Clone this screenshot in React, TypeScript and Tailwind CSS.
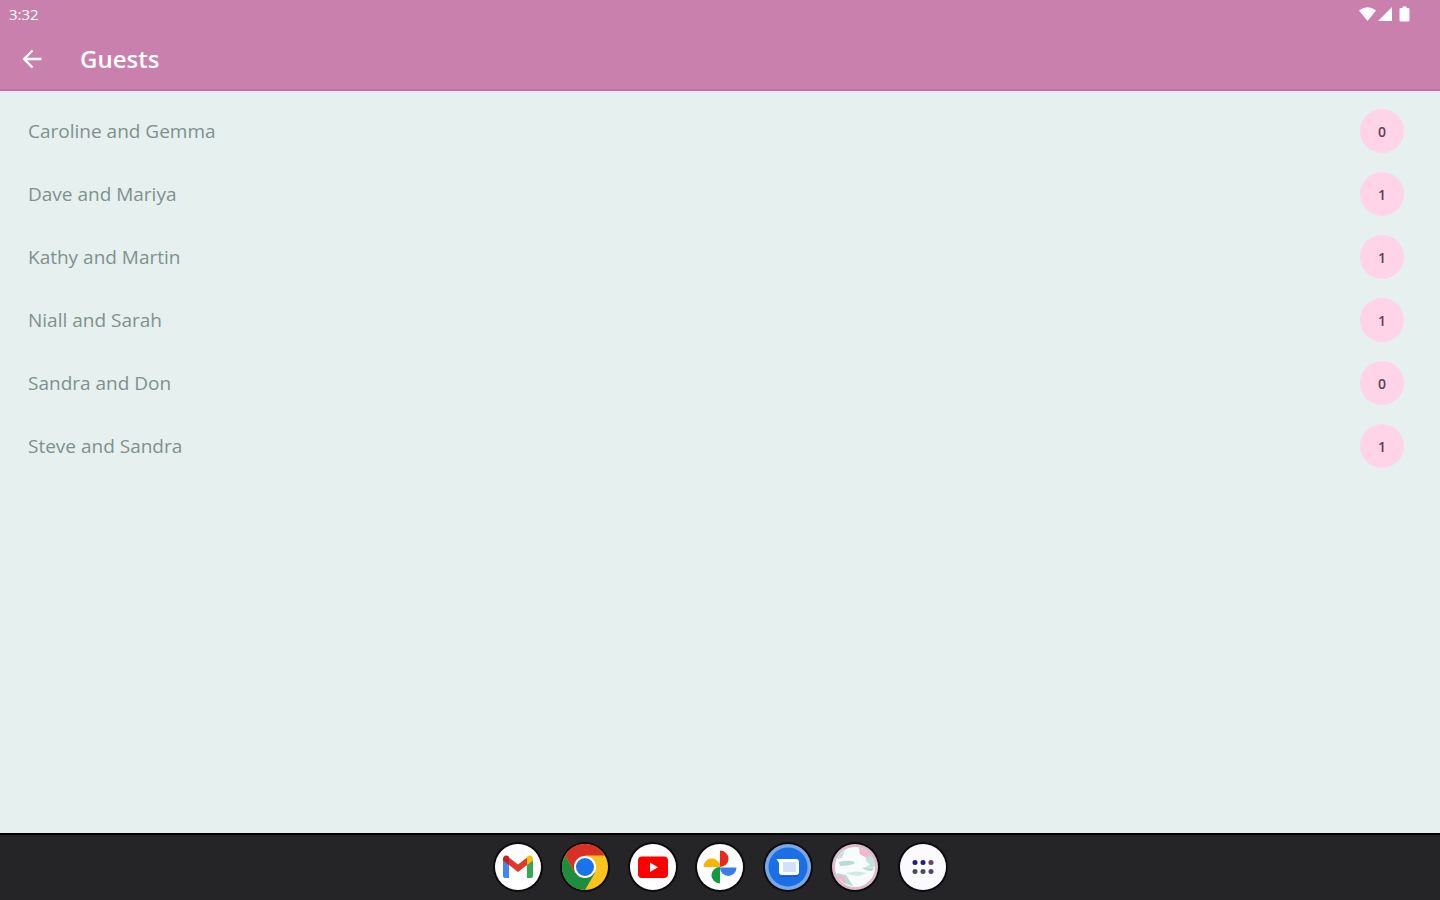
import type { ReactNode } from 'react'

interface Guest {
  name: string
  count: number
}

const guests: Guest[] = [
  { name: 'Caroline and Gemma', count: 0 },
  { name: 'Dave and Mariya', count: 1 },
  { name: 'Kathy and Martin', count: 1 },
  { name: 'Niall and Sarah', count: 1 },
  { name: 'Sandra and Don', count: 0 },
  { name: 'Steve and Sandra', count: 1 },
]

function GmailIcon() {
  return (
    <svg viewBox="0 0 46 46" className="size-full">
      <circle cx="23" cy="23" r="23" fill="#fff" />
      <path d="M8 15v17q0 2 2 2h4V20z" fill="#4285f4" />
      <path d="M38 15v17q0 2-2 2h-4V20z" fill="#34a853" />
      <path d="M14 13.500 23 20.500l9-7V21l-9 7-9-7z" fill="#e0382c" />
      <path d="M8 15c0-3.500 3.500-4.500 6-2.200V21l-6-4.500z" fill="#c5221f" />
      <path d="M38 15c0-3.500-3.500-4.500-6-2.200V21l6-4.500z" fill="#fbbc04" />
    </svg>
  )
}

function ChromeIcon() {
  return (
    <svg viewBox="0 0 46 46" className="size-full">
      <circle cx="23" cy="23" r="23" fill="#fcc31e" />
      <path d="M3.080 11.500A23 23 0 0 1 42.920 11.500H23L13 28.700z" fill="#d93025" />
      <path d="M3.080 11.500A23 23 0 0 0 23 46L33 28.700 13 28.700z" fill="#1e8e3e" />
      <circle cx="23" cy="23" r="11" fill="#fff" />
      <circle cx="23" cy="23" r="9" fill="#1a73e8" />
    </svg>
  )
}

function YoutubeIcon() {
  return (
    <svg viewBox="0 0 46 46" className="size-full">
      <circle cx="23" cy="23" r="23" fill="#fff" />
      <rect x="8" y="12.500" width="30" height="21.500" rx="4" fill="#f00" />
      <path d="M20 18.500v9.500l8-4.750z" fill="#fff" />
    </svg>
  )
}

function PhotosIcon() {
  return (
    <svg viewBox="0 0 46 46" className="size-full">
      <circle cx="23" cy="23" r="23" fill="#fff" />
      <path d="M23 6.500a8.500 8.250 0 0 1 0 16.500z" fill="#e8291c" />
      <path d="M39.500 23.500a8.250 8.500 0 0 1-16.500 0z" fill="#3a7cec" />
      <path d="M23 39.500a8.500 8.250 0 0 1 0-16.500z" fill="#129a3c" />
      <path d="M6.500 23a8.250 8.500 0 0 1 16.500 0z" fill="#fbb404" />
    </svg>
  )
}

function MessagesIcon() {
  return (
    <svg viewBox="0 0 46 46" className="size-full">
      <circle cx="23" cy="23" r="23" fill="#7ba7e4" />
      <circle cx="23" cy="23" r="19.500" fill="#1a6fe6" />
      <path d="M14 18v14h16l4-4v2q0 3-3 3H17q-3 0-3-3z" fill="#1558c0" />
      <path d="M11.500 15H31q3 0 3 3v10q0 3-3 3H17q-3 0-3-3v-9z" fill="#fff" />
      <path d="M18 18h13v10H18z" fill="#d2e0fc" />
    </svg>
  )
}

function WeddingIcon() {
  return (
    <svg viewBox="0 0 46 46" className="size-full">
      <circle cx="23" cy="23" r="23" fill="#dcbccb" />
      <circle cx="23" cy="23" r="20" fill="#f8fbfb" />
      <path d="M27 3.500q9 1.500 13 9l-4 2-8-4z" fill="#f0b9d0" />
      <path d="M34 13l6-1q3 6 3 11l-12 1 7-3-4-4z" fill="#c4e2da" />
      <path d="M5 15q3-6 8-9l-3 8z" fill="#c4e2da" />
      <path d="M7 18q8-2 15-0.500L22 20q-7 2-14 2z" fill="#b7dcd3" />
      <path d="M30 24q6-1 12 0l-2 3q-6 0-10-3z" fill="#b7dcd3" />
      <path d="M14 29q11-3 21 0l-8 3q-7 0-13-3z" fill="#d5e8e6" />
      <path d="M4 29l10 2 7 11q-13-2-17-13z" fill="#b7dcd3" />
      <path d="M5 31l7 1 2 8q-7-3-9-9z" fill="#eeb8cf" />
    </svg>
  )
}

function AppsIcon() {
  return (
    <svg viewBox="0 0 46 46" className="size-full">
      <circle cx="23" cy="23" r="23" fill="#fbfaff" />
      <g fill="#1d1f7c">
        <circle cx="15" cy="18.500" r="2.500" />
        <circle cx="23" cy="18.500" r="2.500" />
        <circle cx="31" cy="18.500" r="2.500" fill="#70406e" />
      </g>
      <g fill="#4a4a62">
        <circle cx="15" cy="27.500" r="2.500" />
        <circle cx="23" cy="27.500" r="2.500" />
        <circle cx="31" cy="27.500" r="2.500" />
      </g>
    </svg>
  )
}

const dock: { label: string; icon: ReactNode }[] = [
  { label: 'Gmail', icon: <GmailIcon /> },
  { label: 'Chrome', icon: <ChromeIcon /> },
  { label: 'YouTube', icon: <YoutubeIcon /> },
  { label: 'Photos', icon: <PhotosIcon /> },
  { label: 'Messages', icon: <MessagesIcon /> },
  { label: 'Wedding', icon: <WeddingIcon /> },
  { label: 'All apps', icon: <AppsIcon /> },
]

function StatusBar() {
  return (
    <div className="flex h-7 items-center justify-between pl-[9px] pr-[29px] text-white">
      <span className="text-[15px] font-medium">3:32</span>
      <svg viewBox="0 0 54 18" className="h-[18px] w-[54px]" fill="currentColor">
        <path d="M2 5.500Q10.500-1 19 5.500L10.500 16z" />
        <path d="M35 2v14H21z" />
        <path d="M43.500 3h2V1.500h4V3h2q1 0 1 1v11q0 1.500-1 1.500h-8q-1 0-1-1.500V4q0-1 1-1z" />
      </svg>
    </div>
  )
}

export default function App() {
  return (
    <div className="flex min-h-screen flex-col bg-[#e6f0ef] font-['Open_Sans',sans-serif]">
      {/* Status bar and toolbar */}
      <header className="border-b-2 border-[#c272a4] bg-[#c980ad]">
        <StatusBar />
        <div className="flex h-[61px] items-center gap-9 px-5 text-white">
          <button aria-label="Back" className="flex size-6 items-center justify-center">
            <svg viewBox="0 0 24 24" className="size-6" fill="none" stroke="currentColor" strokeWidth="2.400">
              <path d="M21.500 12H4.500M12.500 3.500 4.200 12l8.300 8.500" />
            </svg>
          </button>
          <h1 className="text-2xl font-semibold">Guests</h1>
        </div>
      </header>

      {/* Guest list */}
      <main className="flex-1 py-2">
        <ul>
          {guests.map(guest => (
            <li key={guest.name} className="flex h-[63px] items-center justify-between pl-7 pr-9">
              <span className="pt-[2px] text-[19px] text-[#80908d]">{guest.name}</span>
              <span className="flex size-11 items-center justify-center rounded-full bg-[#ffd3e8] pt-[2px] text-sm font-semibold text-[#5f3f52]">
                {guest.count}
              </span>
            </li>
          ))}
        </ul>
      </main>

      {/* Taskbar */}
      <footer className="flex h-[67px] items-center justify-center border-t-2 border-black bg-[#252528] pb-[2px]">
        <nav className="flex w-[451px] justify-between">
          {dock.map(app => (
            <button key={app.label} aria-label={app.label} className="size-[46px] rounded-full ring-2 ring-[#0c0c0e]">
              {app.icon}
            </button>
          ))}
        </nav>
      </footer>
    </div>
  )
}
